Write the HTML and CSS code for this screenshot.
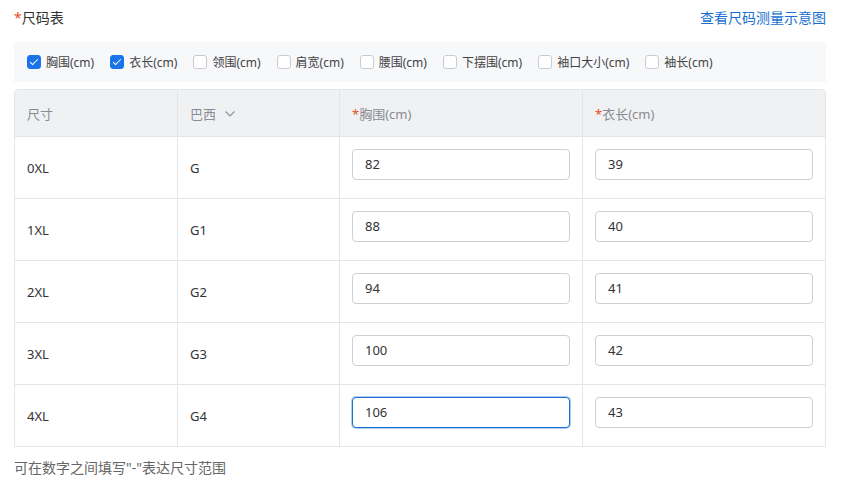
FILE: index.html
```html
<!DOCTYPE html>
<html lang="zh-CN">
<head>
  <meta charset="UTF-8">
  <title>尺码表</title>
  <link rel="stylesheet" href="styles.css">
</head>
<body>
  <div class="size-form">
    <div class="form-head">
      <div class="form-label"><span class="req">*</span>尺码表</div>
      <a class="guide-link" href="#">查看尺码测量示意图</a>
    </div>

    <div class="option-bar">
      <label class="opt"><span class="box checked"></span>胸围(cm)</label>
      <label class="opt"><span class="box checked"></span>衣长(cm)</label>
      <label class="opt"><span class="box"></span>领围(cm)</label>
      <label class="opt"><span class="box"></span>肩宽(cm)</label>
      <label class="opt"><span class="box"></span>腰围(cm)</label>
      <label class="opt"><span class="box"></span>下摆围(cm)</label>
      <label class="opt"><span class="box"></span>袖口大小(cm)</label>
      <label class="opt"><span class="box"></span>袖长(cm)</label>
    </div>

    <table class="size-table">
      <colgroup>
        <col class="c-size">
        <col class="c-size">
        <col class="c-val">
        <col class="c-val">
      </colgroup>
      <thead>
        <tr>
          <th>尺寸</th>
          <th>巴西 <svg class="caret" width="12" height="8" viewBox="0 0 12 8"><path d="M1.5 1.5 L6 6 L10.5 1.5" fill="none" stroke="#8c9099" stroke-width="1.1"/></svg></th>
          <th><span class="req">*</span>胸围(cm)</th>
          <th><span class="req">*</span>衣长(cm)</th>
        </tr>
      </thead>
      <tbody>
        <tr><td>0XL</td><td>G</td><td><div class="inp">82</div></td><td><div class="inp">39</div></td></tr>
        <tr><td>1XL</td><td>G1</td><td><div class="inp">88</div></td><td><div class="inp">40</div></td></tr>
        <tr><td>2XL</td><td>G2</td><td><div class="inp">94</div></td><td><div class="inp">41</div></td></tr>
        <tr><td>3XL</td><td>G3</td><td><div class="inp">100</div></td><td><div class="inp">42</div></td></tr>
        <tr><td>4XL</td><td>G4</td><td><div class="inp focus">106</div></td><td><div class="inp">43</div></td></tr>
      </tbody>
    </table>

    <div class="hint">可在数字之间填写"-"表达尺寸范围</div>
  </div>
</body>
</html>
```

FILE: styles.css
```css
body {
  margin: 0;
  background: #fff;
  font-family: "Noto Sans", "Noto Sans CJK SC", sans-serif;
  color: #333;
}

.size-form {
  width: 812px;
  padding: 4px 0 0 14px;
}

.form-head {
  display: flex;
  justify-content: space-between;
  align-items: center;
  height: 26px;
}

.form-label {
  font-size: 14px;
  color: #333;
}

.req {
  color: #e8501f;
}

.guide-link {
  font-size: 14px;
  color: #1a6fd0;
  text-decoration: none;
}

.option-bar {
  display: flex;
  align-items: center;
  gap: 16px;
  margin-top: 12px;
  height: 40px;
  padding-left: 13px;
  background: #f7f8fa;
  font-size: 12px;
  color: #444;
}

.opt {
  display: flex;
  align-items: center;
  gap: 5px;
}

.box {
  width: 12px;
  height: 12px;
  border: 1px solid #c8cbd0;
  border-radius: 3px;
  background: #fff;
  position: relative;
}

.box.checked {
  background: #1a73e8;
  border-color: #1a73e8;
}

.box.checked::after {
  content: '';
  position: absolute;
  left: 4px;
  top: 1px;
  width: 3px;
  height: 7px;
  border: solid #fff;
  border-width: 0 1.5px 1.5px 0;
  transform: rotate(45deg);
}

.size-table {
  margin-top: 7px;
  width: 812px;
  border-collapse: separate;
  border-spacing: 0;
  table-layout: fixed;
  border: 1px solid #e3e5e8;
  border-radius: 4px 4px 0 0;
  font-size: 13px;
}

.c-size { width: 20%; }
.c-val { width: 30%; }

.size-table th {
  background: #f0f1f3;
  color: #888c94;
  font-weight: normal;
  text-align: left;
  height: 46px;
  padding: 0 12px;
  border-left: 1px solid #e3e5e8;
}

.size-table th:first-child { border-top-left-radius: 4px; }
.size-table th:last-child { border-top-right-radius: 4px; }

.caret {
  margin-left: 5px;
  vertical-align: 1px;
}

.size-table td {
  height: 61px;
  padding: 0 12px;
  border-top: 1px solid #e3e5e8;
  border-left: 1px solid #e3e5e8;
  color: #333;
}

.size-table th:first-child,
.size-table td:first-child {
  border-left: none;
}

.inp {
  height: 29px;
  line-height: 29px;
  margin-bottom: 6px;
  border: 1px solid #cdd0d5;
  border-radius: 4px;
  padding-left: 12px;
  color: #333;
  background: #fff;
}

.inp.focus {
  border-color: #1a6fd0;
  box-shadow: 0 0 0 1px rgba(26, 111, 208, 0.35);
}

.hint {
  margin-top: 10px;
  font-size: 14px;
  color: #666;
}
```
